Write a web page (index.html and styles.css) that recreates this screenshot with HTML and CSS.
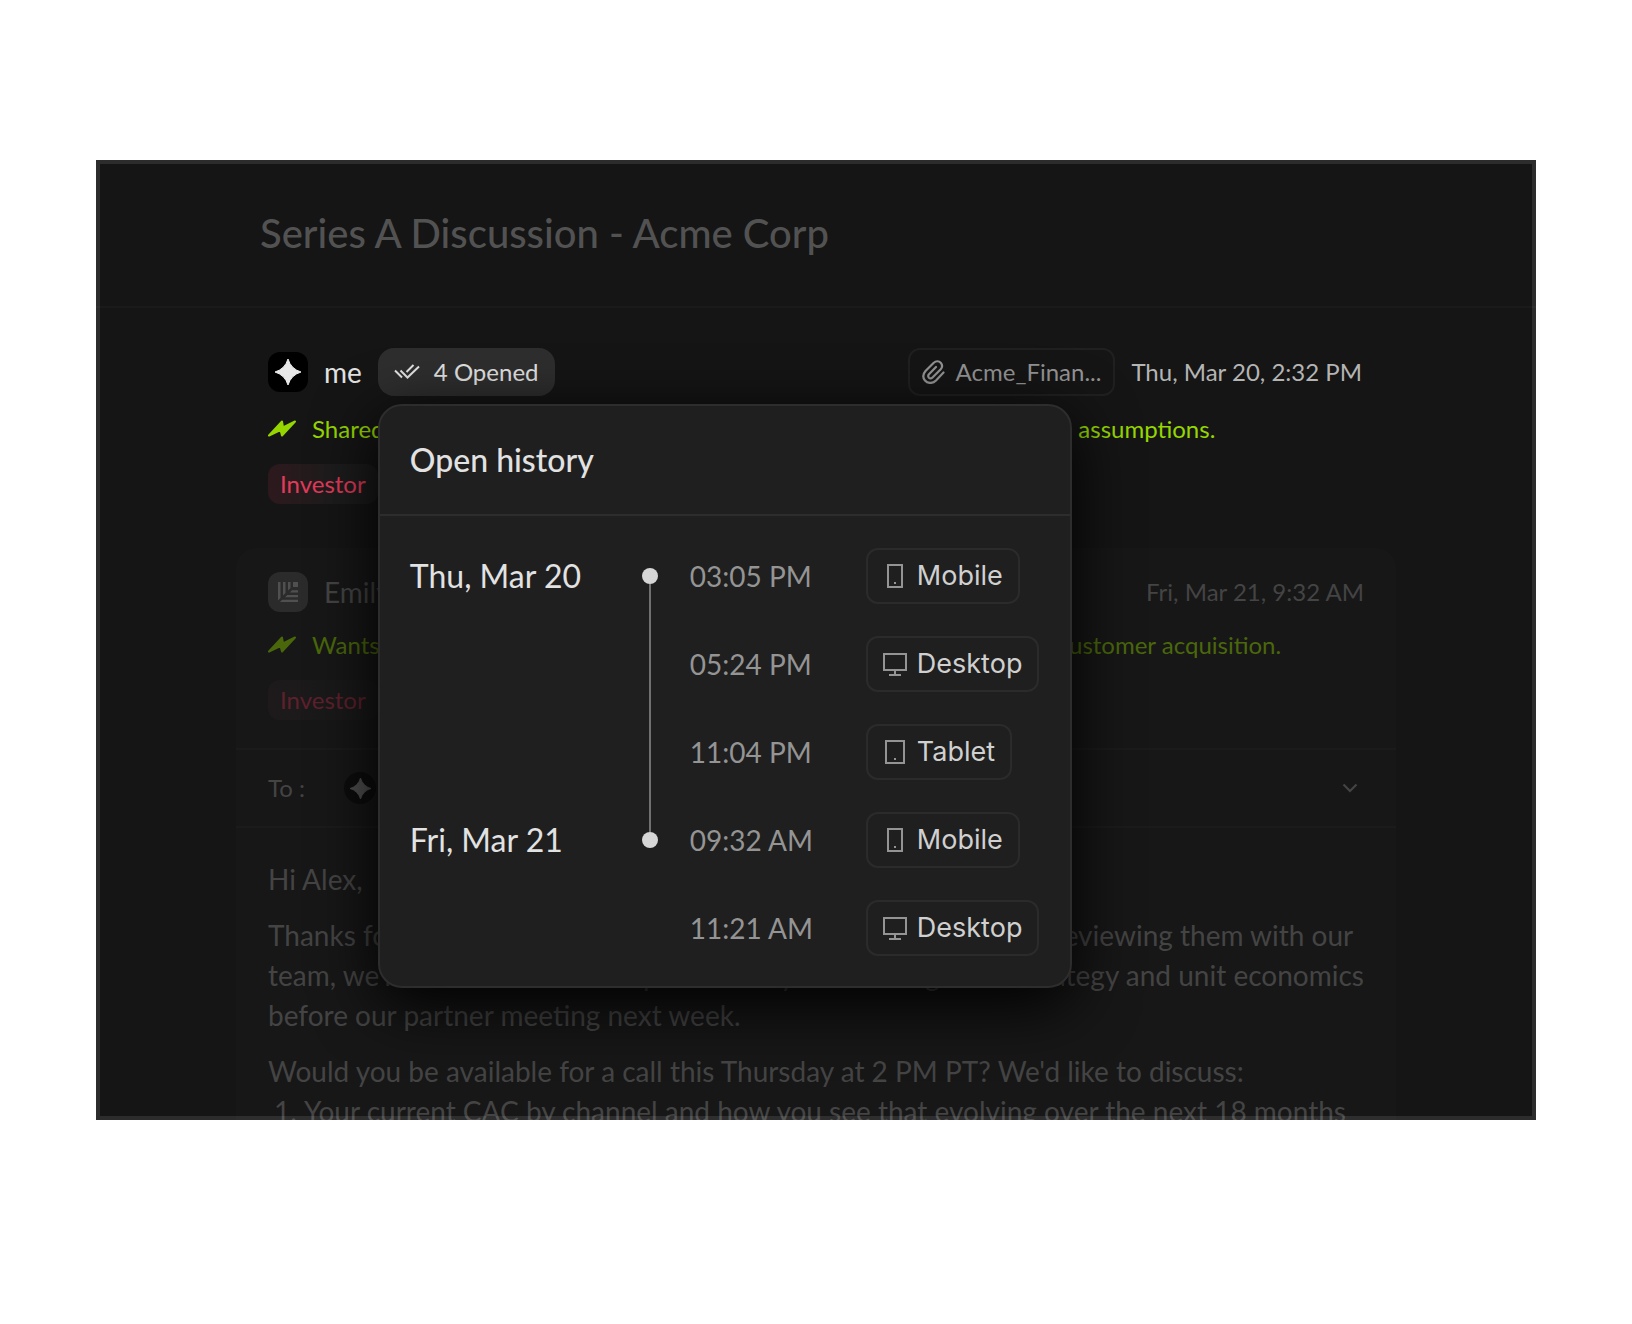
FILE: index.html
```html
<!DOCTYPE html>
<html lang="en">
<head>
    <meta charset="UTF-8">
    <meta name="viewport" content="width=device-width, initial-scale=1.0">
    <title>Series A Discussion - Acme Corp</title>
    <link rel="stylesheet" href="styles.css">
</head>
<body>
    <!-- Shared icons -->
    <svg class="sprite" aria-hidden="true">
        <symbol id="icon-star" viewBox="0 0 26 26">
            <path d="M13 0Q16 10 26 13Q16 16 13 26Q10 16 0 13Q10 10 13 0Z" fill="currentColor" stroke="currentColor" stroke-linejoin="round"/>
        </symbol>
        <symbol id="icon-bolt" viewBox="0 0 28 18">
            <path d="M1 15.500L14 1.500L15 7.500L27 1.500L14 15.500L12.500 10Z" fill="currentColor" stroke="currentColor" stroke-width="2" stroke-linejoin="round"/>
        </symbol>
        <symbol id="icon-mobile" viewBox="0 0 24 24">
            <path d="M5 1h14v22H5z" fill="none" stroke="currentColor" stroke-width="2"/>
            <path d="M11 18h2v2h-2z" fill="currentColor"/>
        </symbol>
        <symbol id="icon-tablet" viewBox="0 0 24 24">
            <path d="M3 1h18v22H3z" fill="none" stroke="currentColor" stroke-width="2"/>
            <path d="M11 18h2v2h-2z" fill="currentColor"/>
        </symbol>
        <symbol id="icon-desktop" viewBox="0 0 24 24">
            <path d="M1 2h22v16H1zM12 18v4M6 23h12" fill="none" stroke="currentColor" stroke-width="2"/>
        </symbol>
    </svg>

    <main class="mail">
        <header class="mail-header">
            <h1 class="subject">Series A Discussion - Acme Corp</h1>
        </header>

        <article class="message">
            <div class="message-top">
                <span class="avatar"><svg width="26" height="26"><use href="#icon-star"/></svg></span>
                <span class="sender">me</span>
                <div class="opened">
                    <button class="opened-btn" type="button" aria-expanded="true">
                        <svg width="26" height="18" viewBox="0 0 26 18" fill="none" stroke="currentColor" stroke-width="2"><path d="M1 7.500l7 7M6.500 7.500l7 7L25 3.500M12.500 9L19.500 2"/></svg>
                        4 Opened
                    </button>

                    <section class="history" aria-label="Open history">
                        <h2 class="history-title">Open history</h2>
                        <div class="history-body">
                            <div class="day">
                                <h3 class="day-name">Thu, Mar 20</h3>
                                <div class="rail rail-line"></div>
                                <ul class="opens">
                                    <li><time>03:05 PM</time><span class="device"><svg width="24" height="24"><use href="#icon-mobile"/></svg>Mobile</span></li>
                                    <li><time>05:24 PM</time><span class="device"><svg width="24" height="24"><use href="#icon-desktop"/></svg>Desktop</span></li>
                                    <li><time>11:04 PM</time><span class="device"><svg width="24" height="24"><use href="#icon-tablet"/></svg>Tablet</span></li>
                                </ul>
                            </div>
                            <div class="day">
                                <h3 class="day-name">Fri, Mar 21</h3>
                                <div class="rail"></div>
                                <ul class="opens">
                                    <li><time>09:32 AM</time><span class="device"><svg width="24" height="24"><use href="#icon-mobile"/></svg>Mobile</span></li>
                                    <li><time>11:21 AM</time><span class="device"><svg width="24" height="24"><use href="#icon-desktop"/></svg>Desktop</span></li>
                                </ul>
                            </div>
                        </div>
                    </section>
                </div>
                <button class="attachment" type="button">
                    <svg width="24" height="24" viewBox="0 0 24 24" fill="none" stroke="currentColor" stroke-width="2.200" stroke-linecap="round"><path d="M21.500 12.500L14 20.500C10.500 24 5.500 23.500 3 20.500C.5 17.500 1 14 3.500 11L11.500 3C14 .8 17 1 18.700 2.800C20.500 4.800 20.300 7.500 18.500 9.500L10.500 17.500C9.300 18.700 7.700 18.700 6.800 17.600C6 16.500 6.200 15 7.200 14L14 7"/></svg>
                    Acme_Finan...
                </button>
                <time class="date">Thu, Mar 20, 2:32 PM</time>
            </div>
            <p class="summary">
                <svg width="28" height="18"><use href="#icon-bolt"/></svg>
                <span>Shared the recent financial model with revenue projections and the main assumptions.</span>
            </p>
            <span class="tag">Investor</span>
        </article>

        <article class="message card">
            <div class="card-head">
                <div class="message-top">
                    <span class="avatar avatar-firm">
                        <svg width="20" height="20" viewBox="0 0 20 20" fill="currentColor"><path d="M0 0h2.500v16L0 18.500zM5 0h2.500v11L5 13.500zM10 0h2.500v6L10 8.500zM15 0h5v5h-5zM20 20v-2.200H4.200L2 20zM20 15.200V13H9.200L7 15.200zM20 10.400V8.200h-6L11.800 10.400z"/></svg>
                    </span>
                    <span class="sender">Emily</span>
                    <time class="date">Fri, Mar 21, 9:32 AM</time>
                </div>
                <p class="summary">
                    <svg width="28" height="18"><use href="#icon-bolt"/></svg>
                    <span>Wants to set up a call this Thursday to discuss the growth strategy and customer acquisition.</span>
                </p>
                <span class="tag">Investor</span>
            </div>

            <div class="recipients">
                <span class="to">To :</span>
                <span class="avatar avatar-small"><svg width="21" height="21"><use href="#icon-star"/></svg></span>
                <button class="expand" type="button" aria-label="Show details">
                    <svg width="16" height="10" viewBox="0 0 16 10" fill="none" stroke="currentColor" stroke-width="2.200"><path d="M1.500 1.500L8 8l6.500-6.500"/></svg>
                </button>
            </div>

            <div class="body">
                <p>Hi Alex,</p>
                <p>Thanks for sharing your updated financial projections. After first reviewing them with our<br>team, we're interested in a deeper look at your future growth strategy and unit economics<br>before our partner meeting next week.</p>
                <p>Would you be available for a call this Thursday at 2 PM PT? We'd like to discuss:</p>
                <ol>
                    <li>Your current CAC by channel and how you see that evolving over the next 18 months</li>
                </ol>
            </div>
        </article>
    </main>
</body>
</html>
```
FILE: styles.css
```css
* {
    box-sizing: border-box;
}
body {
    margin: 0;
    height: 100vh;
    padding: 160px 96px 204px;
    background: #fff;
    font-family: Lato, "Liberation Sans", sans-serif;
    font-size: 24px;
    line-height: 32px;
    color: #e2e2e2;
}
h1, h2, h3, p, ul, ol {
    margin: 0;
    padding: 0;
}
button {
    font: inherit;
    cursor: pointer;
}
svg {
    display: block;
    flex-shrink: 0;
}
.sprite {
    position: absolute;
    width: 0;
    height: 0;
}

/* Window */
.mail {
    position: relative;
    height: 100%;
    overflow: hidden;
    background: #151515;
}
.mail::after {
    content: "";
    position: absolute;
    inset: 0;
    border: 4px solid rgba(255, 255, 255, 0.1);
    pointer-events: none;
}
.mail-header {
    padding: 50px 24px;
    border-bottom: 2px solid #1a1a1a;
}
.subject {
    max-width: 1112px;
    margin: 0 auto;
    font-size: 40px;
    line-height: 46px;
    font-weight: 500;
    color: #525252;
}

/* Messages */
.message {
    max-width: 1160px;
    margin: 0 auto;
    padding: 40px 34px 44px 32px;
}
.message-top {
    display: flex;
    align-items: center;
    gap: 16px;
}
.avatar {
    display: flex;
    align-items: center;
    justify-content: center;
    width: 40px;
    height: 40px;
    border-radius: 12px;
    background: #000;
    color: #e8e8e8;
}
.sender {
    font-size: 28px;
}
.date {
    color: #b4b4b4;
}
.summary {
    display: flex;
    align-items: center;
    gap: 16px;
    margin: 16px 0 18px;
    line-height: 34px;
    color: #96d600;
    white-space: nowrap;
}
.tag {
    display: inline-block;
    padding: 4px 12px;
    border-radius: 12px;
    background: linear-gradient(90deg, #2d191d, #1d1c1c 60%);
    color: #e23a5a;
    vertical-align: top;
}
.attachment {
    display: flex;
    align-items: center;
    gap: 10px;
    height: 48px;
    margin-left: auto;
    padding: 0 12px;
    border: 2px solid #202020;
    border-radius: 12px;
    background: none;
    color: #949494;
}

/* Opened badge */
.opened {
    position: relative;
}
.opened-btn {
    display: flex;
    align-items: center;
    gap: 14px;
    height: 48px;
    padding: 0 16px;
    border: 0;
    border-radius: 16px;
    background: #2e2e2e;
    color: #e2e2e2;
}

/* Open history popover */
.history {
    position: absolute;
    top: 56px;
    left: 0;
    z-index: 1;
    border: 2px solid #2d2d2d;
    border-radius: 24px;
    background: #1f1f1f;
    box-shadow: 0 16px 64px #000;
    white-space: nowrap;
}
.history-title {
    padding: 34px 30px;
    border-bottom: 2px solid #2d2d2d;
    font-size: 32px;
    line-height: 40px;
    font-weight: 500;
}
.history-body {
    padding: 32px 30px 30px;
}
.day {
    display: grid;
    grid-template-columns: 232px 16px auto;
}
.day + .day {
    margin-top: 32px;
}
.day-name {
    font-size: 32px;
    line-height: 56px;
    font-weight: 400;
}
.rail {
    display: flex;
    flex-direction: column;
    align-items: center;
    padding-top: 20px;
}
.rail::before {
    content: "";
    width: 16px;
    height: 16px;
    border-radius: 50%;
    background: #d6d6d6;
}
.rail-line {
    margin-bottom: -52px;
}
.rail-line::after {
    content: "";
    flex: 1;
    width: 2px;
    background: #707070;
}
.opens {
    display: grid;
    gap: 32px;
    padding-left: 32px;
    list-style: none;
}
.opens li {
    display: grid;
    grid-template-columns: 176px 174px;
    align-items: center;
    justify-items: start;
    font-size: 28px;
    color: #949494;
}
.device {
    display: flex;
    align-items: center;
    gap: 10px;
    height: 56px;
    padding: 0 15px;
    border: 2px solid #2b2b2b;
    border-radius: 12px;
    font-family: Inter, "Liberation Sans", sans-serif;
    font-size: 27px;
    color: #d0d0d0;
}
.device svg {
    color: #949494;
}

/* Reply card */
.card {
    padding: 0;
    border-radius: 20px 20px 0 0;
    background: #171717;
}
.card-head {
    padding: 24px 32px 28px;
}
.card .sender,
.card .date,
.to,
.expand,
.body {
    color: #444;
}
.card .date {
    margin-left: auto;
}
.card .summary {
    color: #4a680b;
}
.card .tag {
    background: linear-gradient(90deg, #1e1a1b, #191919 60%);
    color: #5e202d;
}
.avatar-firm {
    background: #2b2b2b;
    color: #505050;
}
.avatar-small {
    width: 32px;
    height: 32px;
    border-radius: 50%;
    background: #0d0d0d;
    color: #505050;
}
.recipients {
    display: flex;
    align-items: center;
    height: 80px;
    padding: 0 32px;
    border-top: 2px solid #1b1b1b;
    border-bottom: 2px solid #1b1b1b;
}
.to {
    width: 76px;
}
.expand {
    margin-left: auto;
    padding: 6px;
    border: 0;
    background: none;
}
.body {
    padding: 31px 32px;
    font-size: 28px;
    line-height: 40px;
    white-space: nowrap;
}
.body p {
    margin-bottom: 16px;
}
.body p:has(+ ol) {
    margin-bottom: 0;
}
.body ol {
    padding-left: 36px;
}
```
